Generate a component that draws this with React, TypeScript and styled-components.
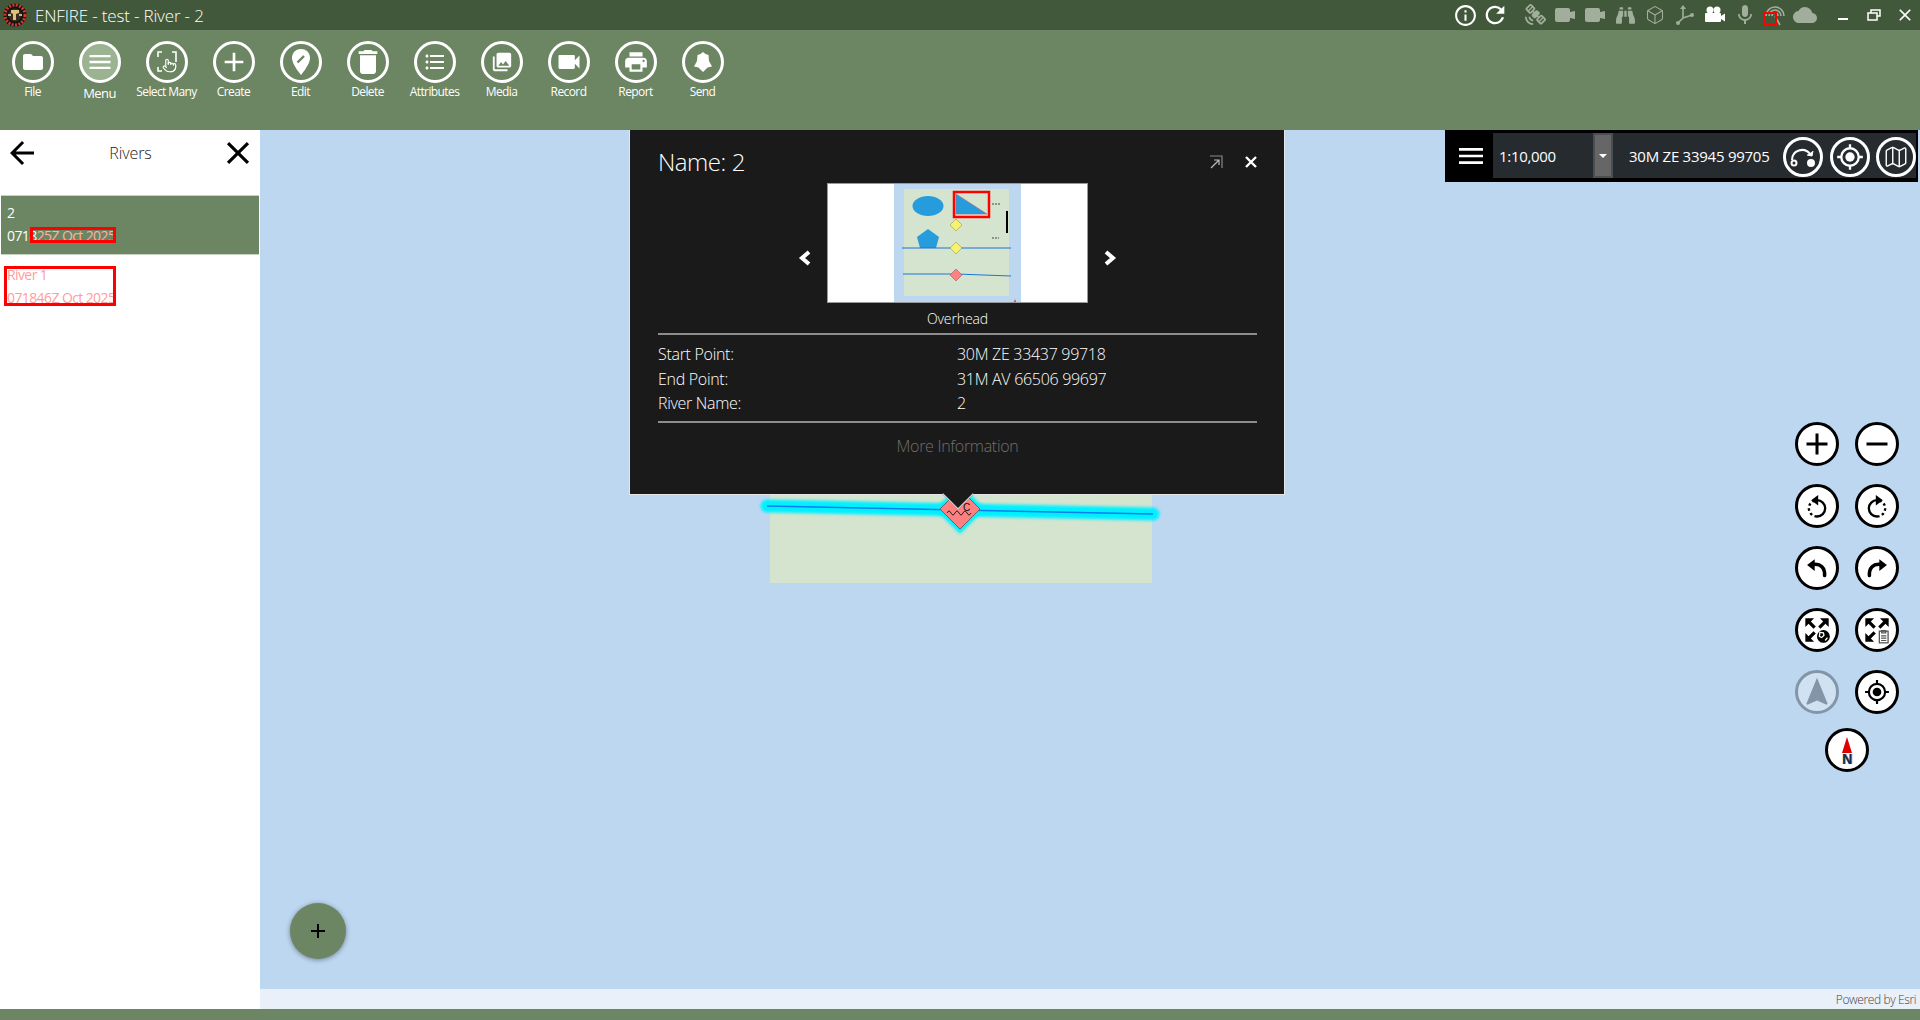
import React from 'react';
import styled, { createGlobalStyle } from 'styled-components';
import {
  MdFolder,
  MdMenu,
  MdAdd,
  MdRemove,
  MdDelete,
  MdFormatListBulleted,
  MdPhotoLibrary,
  MdVideocam,
  MdPrint,
  MdInfoOutline,
  MdRefresh,
  MdSatelliteAlt,
  MdMic,
  MdCloud,
  MdClose,
  MdArrowBack,
  MdNavigation,
} from 'react-icons/md';
import { FaBinoculars } from 'react-icons/fa';
import { Box, Map as MapIcon, Pointer } from 'lucide-react';

const GREEN = '#6c8562';
const GREEN_DARK = '#41583a';
const MAP_BLUE = '#bdd7f1';

const GlobalStyle = createGlobalStyle`
  html, body {
    margin: 0;
    height: 100%;
    overflow: hidden;
    background: #fff;
  }
  body {
    font-family: "Open Sans", "Liberation Sans", sans-serif;
    font-weight: 300;
  }
`;

const Page = styled.div`
  display: flex;
  flex-direction: column;
  width: 1920px;
  height: 1020px;
`;

const TitleBar = styled.div`
  display: flex;
  align-items: center;
  height: 30px;
  flex: none;
  background: ${GREEN_DARK};
  color: #fff;
`;

const AppTitle = styled.div`
  margin-left: 8px;
  font-size: 17px;
  letter-spacing: -0.17px;
  white-space: nowrap;
`;

const TitleSpacer = styled.div`
  flex: 1;
`;

const TitleGroup = styled.div<{ $gap?: number }>`
  display: flex;
  margin-left: ${({ $gap }) => $gap ?? 10}px;
`;

const TitleSlot = styled.div<{ $dim?: boolean; $width?: number; $flip?: boolean }>`
  position: relative;
  display: flex;
  align-items: center;
  justify-content: center;
  width: ${({ $width }) => $width ?? 30}px;
  height: 30px;
  color: ${({ $dim }) => ($dim ? '#a1ae9b' : '#fff')};
  font-size: 22px;

  svg {
    transform: ${({ $flip }) => ($flip ? 'scaleX(-1)' : 'none')};
  }
`;

const SignalMark = styled.div`
  position: absolute;
  left: 3px;
  top: 12px;
  width: 14px;
  height: 14px;
  box-sizing: border-box;
  border: 2px solid #f00;
`;

const Toolbar = styled.div`
  display: flex;
  height: 100px;
  flex: none;
  padding-left: 0;
  background: ${GREEN};
`;

const ToolButton = styled.div`
  display: flex;
  flex-direction: column;
  align-items: center;
  width: 67px;
  padding-top: 11px;
  color: #fff;

  &:first-child {
    margin-left: -1px;
  }
`;

const ToolRing = styled.div<{ $active?: boolean }>`
  display: flex;
  align-items: center;
  justify-content: center;
  width: 42px;
  height: 42px;
  box-sizing: border-box;
  border: 3px solid #fff;
  border-radius: 50%;
  font-size: 24px;
  background: ${({ $active }) => ($active ? '#9bb391' : 'transparent')};
`;

const ToolLabel = styled.div<{ $active?: boolean }>`
  margin-top: ${({ $active }) => ($active ? 2 : 1)}px;
  font-size: ${({ $active }) => ($active ? 13 : 12)}px;
  font-weight: 400;
  line-height: 16px;
  letter-spacing: -0.6px;
  white-space: nowrap;
`;

const Body = styled.div`
  display: flex;
  flex: 1;
  min-height: 0;
`;

const Sidebar = styled.div`
  display: flex;
  flex-direction: column;
  width: 260px;
  flex: none;
  background: #fff;
`;

const SidebarHeader = styled.div`
  display: grid;
  grid-template-columns: 1fr auto 1fr;
  align-items: center;
  height: 46px;
  padding: 0 3px 0 4px;
  margin-bottom: 19px;
  color: #000;

  svg:last-child {
    justify-self: end;
  }
`;

const SidebarTitle = styled.div`
  font-size: 16px;
  letter-spacing: -0.1px;
  color: #222;
`;

const RiverRow = styled.div<{ $selected?: boolean }>`
  position: relative;
  height: 60px;
  box-sizing: border-box;
  margin: 0 1px;
  padding: ${({ $selected }) => ($selected ? 5 : 8)}px 6px 0;
  font-size: 14px;
  line-height: 23px;
  font-weight: 400;
  color: #fff;
  background: ${({ $selected }) => ($selected ? GREEN : 'transparent')};
  border-top: ${({ $selected }) => ($selected ? '1px solid #c8d0c4' : 'none')};
  border-bottom: ${({ $selected }) => ($selected ? '1px solid #c8d0c4' : 'none')};
`;

const RowLine = styled.div<{ $pink?: boolean }>`
  white-space: nowrap;
  letter-spacing: -0.6px;
  color: ${({ $pink }) => ($pink ? '#ff9c9c' : 'inherit')};
`;

const PinkText = styled.span`
  color: #ffb0a8;
`;

const RedBox = styled.div<{ $left: number; $top: number; $width: number; $height: number }>`
  position: absolute;
  left: ${({ $left }) => $left}px;
  top: ${({ $top }) => $top}px;
  width: ${({ $width }) => $width}px;
  height: ${({ $height }) => $height}px;
  box-sizing: border-box;
  border: 3px solid #f00;
`;

const MapArea = styled.div`
  display: flex;
  flex-direction: column;
  flex: 1;
  min-width: 0;
`;

const MapCanvas = styled.div`
  position: relative;
  flex: 1;
  background: ${MAP_BLUE};
  overflow: hidden;
`;

const Attribution = styled.div`
  display: flex;
  align-items: center;
  justify-content: flex-end;
  height: 20px;
  flex: none;
  padding-right: 4px;
  background: #e9f0fa;
  color: #444;
  font-size: 12px;
  letter-spacing: -0.4px;
`;

const BottomBar = styled.div`
  height: 11px;
  flex: none;
  background: ${GREEN};
`;

const FeatureLayer = styled.svg`
  position: absolute;
  left: 0;
  top: 0;
`;

const Popup = styled.div`
  position: absolute;
  left: 369px;
  top: 0;
  width: 656px;
  height: 365px;
  box-sizing: border-box;
  padding: 0 27px 0 28px;
  background: #1a1a1a;
  border: solid #e6e6e6;
  border-width: 0 1px 1px;
  color: #fff;

  &::after {
    content: '';
    position: absolute;
    left: 317px;
    bottom: -11px;
    width: 21px;
    height: 21px;
    background: #1a1a1a;
    border: solid #e6e6e6;
    border-width: 0 1px 1px 0;
    transform: rotate(45deg);
  }
`;

const PopupHeader = styled.div`
  display: flex;
  align-items: center;
  justify-content: space-between;
  height: 43px;
  padding-top: 10px;
`;

const PopupTitle = styled.div`
  font-size: 24px;
  letter-spacing: -0.45px;
`;

const PopupActions = styled.div`
  display: flex;
  align-items: center;
  gap: 22px;
`;

const Carousel = styled.div`
  display: flex;
  align-items: center;
  justify-content: center;
  gap: 16px;
  height: 120px;
`;

const CarouselArrow = styled.svg`
  margin-top: 30px;
`;

const ThumbFrame = styled.div`
  display: flex;
  justify-content: center;
  width: 261px;
  height: 120px;
  box-sizing: border-box;
  background: #fff;
  border: 1px solid #999;
  overflow: hidden;
`;

const Caption = styled.div`
  height: 30px;
  line-height: 31px;
  text-align: center;
  font-size: 14px;
  letter-spacing: -0.1px;
`;

const Rule = styled.div`
  height: 2px;
  background: #8c8c8c;
`;

const AttrTable = styled.div`
  display: grid;
  grid-template-columns: 299px 1fr;
  grid-auto-rows: 24.5px;
  align-items: center;
  padding: 7px 0 5px;
  font-size: 16px;
  letter-spacing: -0.3px;
`;

const MoreInfo = styled.div`
  height: 46px;
  line-height: 46px;
  text-align: center;
  font-size: 16px;
  letter-spacing: -0.3px;
  color: #707070;
`;

const ScaleBar = styled.div`
  position: absolute;
  right: 2px;
  top: 0;
  display: flex;
  align-items: stretch;
  width: 473px;
  height: 52px;
  box-sizing: border-box;
  padding: 3px 2px 4px 4px;
  background: #000;
  color: #fff;
`;

const ScaleMenu = styled.div`
  display: flex;
  align-items: center;
  justify-content: center;
  width: 44px;
  font-size: 32px;
  background: #000;
`;

const ScaleField = styled.div`
  display: flex;
  align-items: center;
  width: 100px;
  box-sizing: border-box;
  padding-left: 6px;
  background: #262b2f;
  font-size: 15px;
  font-weight: 400;
  letter-spacing: -0.3px;
`;

const ScaleDrop = styled.div`
  display: flex;
  align-items: center;
  justify-content: center;
  width: 20px;
  background: #666;
  border: 2px solid #4b4f52;
  box-sizing: border-box;

  &::before {
    content: '';
    border: solid transparent;
    border-width: 4px 4px 0;
    border-top-color: #fff;
  }
`;

const CoordField = styled.div`
  display: flex;
  align-items: center;
  flex: 1;
  padding-left: 16px;
  background: #262b2f;
  font-size: 15px;
  font-weight: 400;
  letter-spacing: -0.25px;
  white-space: nowrap;
`;

const ScaleIcons = styled.div`
  display: flex;
  gap: 6.5px;
  margin-left: auto;
`;

const ScaleRing = styled.div`
  display: flex;
  align-items: center;
  justify-content: center;
  width: 40px;
  height: 40px;
  margin-top: 3px;
  box-sizing: border-box;
  border: 3px solid #fff;
  border-radius: 50%;
  font-size: 24px;
`;

const MapControls = styled.div`
  position: absolute;
  right: 21px;
  top: 292px;
  display: grid;
  grid-template-columns: repeat(2, 44px);
  grid-auto-rows: 44px;
  column-gap: 16px;
  row-gap: 18px;
  justify-items: center;
`;

const RoundControl = styled.div<{ $disabled?: boolean; $wide?: boolean }>`
  display: flex;
  align-items: center;
  justify-content: center;
  width: 44px;
  height: 44px;
  box-sizing: border-box;
  border: 3px solid ${({ $disabled }) => ($disabled ? '#8296a8' : '#000')};
  border-radius: 50%;
  background: ${({ $disabled }) => ($disabled ? '#d0e1f2' : '#fff')};
  color: ${({ $disabled }) => ($disabled ? '#8296a8' : '#000')};
  font-size: 30px;
  grid-column: ${({ $wide }) => ($wide ? '1 / span 2' : 'auto')};
  margin-top: ${({ $wide }) => ($wide ? -4 : 0)}px;
`;

const CompassStack = styled.div`
  display: flex;
  flex-direction: column;
  align-items: center;
`;

const CompassN = styled.div`
  margin-top: 1px;
  font-family: "Liberation Sans", sans-serif;
  font-size: 14px;
  font-weight: 700;
  line-height: 10px;
  color: #0c2d6b;
  text-shadow: 1px 0 0 #c98a2a;
`;

const Fab = styled.div`
  position: absolute;
  left: 30px;
  bottom: 30px;
  display: flex;
  align-items: center;
  justify-content: center;
  width: 56px;
  height: 56px;
  border-radius: 50%;
  background: ${GREEN};
  box-shadow: 0 1px 5px rgba(0, 0, 0, 0.4);
  color: #000;
`;

const Logo = () => (
  <svg width="24" height="24" viewBox="0 0 24 24" style={{ marginLeft: 3, flex: 'none' }}>
    <circle cx="12" cy="12" r="11.5" fill="#141414" />
    <circle cx="12" cy="12" r="10" fill="none" stroke="#d43a30" strokeWidth="3" strokeDasharray="2 1.4" />
    <circle cx="12" cy="12" r="6.5" fill="#3a2b1c" />
    <path d="M8 7h8v3l-3 1v6h-3v-6L8 10z" fill="#d9c27a" />
    <path d="M5 12h3M16 12h3" stroke="#e6e0cf" strokeWidth="1.4" />
  </svg>
);

const SelectManyIcon = () => (
  <svg width="26" height="26" viewBox="0 0 26 26" fill="none" stroke="#fff" strokeWidth="1.6">
    <path d="M8 3H4v5M18 3h4v5M4 18v4h4M22 13V8" />
    <Pointer x={8} y={9} width={15} height={15} strokeWidth={1.8} color="#fff" />
  </svg>
);

const EditPinIcon = () => (
  <svg width="24" height="28" viewBox="0 0 24 28">
    <path d="M12 1C6 1 3 5.500 3 10c0 6.500 9 17 9 17s9-10.500 9-17c0-4.500-3-9-9-9z" fill="#fff" />
    <path d="M8.500 14.500l6.500-6.500" stroke={GREEN} strokeWidth="2.4" />
  </svg>
);

const SendIcon = () => (
  <svg width="24" height="24" viewBox="0 0 24 24" fill="#fff">
    <path d="M12 2l2.500 2 3 1 .5 6 3 5.500-4.500 1L12 22l-4.500-4.500-4.500-1L6 11l.5-6 3-1z" />
  </svg>
);

const CameraFilled = () => (
  <svg width="22" height="18" viewBox="0 0 22 18" fill="currentColor">
    <rect x="1" y="2" width="15" height="14" rx="2" />
    <path d="M16 6l5-1v8l-5-1z" />
  </svg>
);

const AxisIcon = () => (
  <svg width="22" height="22" viewBox="0 0 22 22" fill="currentColor" stroke="currentColor" strokeWidth="1.6">
    <path d="M9 3v11M9 14l-5 5M9 14l9-3" fill="none" />
    <path d="M6 5l3-4 3 4z" stroke="none" />
    <circle cx="4" cy="19" r="2" stroke="none" />
    <circle cx="18" cy="11" r="2" stroke="none" />
  </svg>
);

const MovieCameraIcon = () => (
  <svg width="22" height="20" viewBox="0 0 22 20" fill="#fff">
    <circle cx="6" cy="5" r="3.500" />
    <circle cx="13" cy="5" r="3.500" />
    <rect x="1" y="8" width="16" height="9" rx="1" />
    <path d="M17 11l4-2.500v8L17 14z" />
  </svg>
);

const SignalIcon = () => (
  <svg width="22" height="22" viewBox="0 0 22 22" fill="none" stroke="currentColor" strokeWidth="1.6">
    <path d="M2 12a9 9 0 0 1 18 0M5 12a6 6 0 0 1 12 0M8 12a3 3 0 0 1 6 0" />
    <path d="M11 12l5 9" />
  </svg>
);

const RestoreIcon = () => (
  <svg width="14" height="12" viewBox="0 0 14 12" fill="none" stroke="#fff" strokeWidth="1.500">
    <rect x="1" y="4" width="9" height="7" />
    <path d="M4 4V1h9v6h-3" />
  </svg>
);

const MinimizeIcon = () => (
  <svg width="10" height="12" viewBox="0 0 10 12">
    <rect x="0" y="9" width="10" height="2" fill="#fff" />
  </svg>
);

const SmallClose = () => (
  <svg width="12" height="12" viewBox="0 0 12 12" stroke="#fff" strokeWidth="2.400">
    <path d="M1 1l10 10M11 1L1 11" />
  </svg>
);

const PopoutIcon = () => (
  <svg width="14" height="14" viewBox="0 0 14 14" fill="none" stroke="#bbb" strokeWidth="1.200">
    <path d="M1 1h12v12" stroke="#888" />
    <path d="M2 13l8-8M5 5h5v5" />
  </svg>
);

const ReturnIcon = () => (
  <svg width="30" height="24" viewBox="0 0 30 24" fill="none" stroke="#fff" strokeWidth="2">
    <path d="M4 15A10 10 0 0 1 22 9" />
    <circle cx="6" cy="18" r="2.500" />
    <circle cx="23" cy="18" r="3" fill="#fff" />
    <path d="M19 10l5 1 1-5" fill="#fff" strokeWidth="1" />
  </svg>
);

const TargetIcon = ({ size, ink }: { size: number; ink: string }) => (
  <svg width={size} height={size} viewBox="0 0 24 24" fill="none" stroke={ink} strokeWidth="2">
    <circle cx="12" cy="12" r="7.500" />
    <circle cx="12" cy="12" r="4" fill={ink} stroke="none" />
    <path d="M12 1v3.500M12 19.500V23M1 12h3.500M19.500 12H23" />
  </svg>
);

const RotateIcon = ({ flip }: { flip?: boolean }) => (
  <svg width="28" height="28" viewBox="0 0 24 24" fill="none" stroke="#000" strokeWidth="2" style={{ transform: flip ? 'scaleX(-1)' : undefined }}>
    <path d="M12 7a7 7 0 0 1 0 14" />
    <path d="M12 21a7 7 0 0 1 0-14" strokeDasharray="2.200 2.200" />
    <path d="M7 7l6-4.500v9z" fill="#000" stroke="none" />
  </svg>
);

const UndoIcon = ({ flip }: { flip?: boolean }) => (
  <svg width="28" height="28" viewBox="0 0 24 24" fill="none" stroke="#000" strokeWidth="3" style={{ transform: flip ? 'scaleX(-1)' : undefined }}>
    <path d="M9 9c6-1 10 3 9.500 9.500" strokeLinecap="round" />
    <path d="M3.500 9.500L10 4.500v10z" fill="#000" stroke="none" />
  </svg>
);

const CornerArrows = () => (
  <>
    <path d="M2 2h7.500L2 9.500zM22 2h-7.500L22 9.500zM2 22v-7.500L9.500 22z" fill="#000" />
    <path d="M4 4l6 6M20 4l-6 6M4 20l6-6" stroke="#000" strokeWidth="2.800" />
  </>
);

const FitGlobeIcon = () => (
  <svg width="28" height="28" viewBox="0 0 24 24" fill="none">
    <CornerArrows />
    <circle cx="17.500" cy="17.500" r="5.500" fill="#000" />
    <path d="M14.500 14l3 .5 .5 2-2 2-2-1zM19 21l2-2.500" stroke="#fff" strokeWidth="1.100" />
  </svg>
);

const FitClipIcon = () => (
  <svg width="28" height="28" viewBox="0 0 24 24" fill="none">
    <CornerArrows />
    <rect x="14" y="13" width="7.500" height="10" fill="#fff" stroke="#555" strokeWidth="1.100" />
    <path d="M16 12.500h3.500v2H16zM15.500 17h4.500M15.500 19h4.500M15.500 21h4.500" stroke="#555" strokeWidth="1" />
  </svg>
);

const Thumbnail = () => (
  <svg width="127" height="118" viewBox="0 1 127 118">
    <rect x="0" y="0" width="127" height="120" fill={MAP_BLUE} />
    <rect x="10" y="6" width="105" height="107" fill="#d4e4cf" />
    <ellipse cx="34" cy="23" rx="15.500" ry="10" fill="#269cdc" />
    <path d="M62 11l31 20H62z" fill="#269cdc" stroke="#c75a6a" strokeWidth="0.600" />
    <rect x="60" y="9" width="35" height="25" fill="none" stroke="#f00" strokeWidth="2.500" />
    <path d="M34 46l11 8-3 11H26l-3-11z" fill="#269cdc" />
    <path d="M8 65h109M9 91l53 0 55 2" stroke="#1d74d8" strokeWidth="1" fill="none" />
    <path d="M62 36l6 6-6 6-6-6zM62 59l6 6-6 6-6-6z" fill="#f7f26e" stroke="#8a8a4a" strokeWidth="0.500" />
    <path d="M62 86l6 6-6 6-6-6z" fill="#ff8080" stroke="#8a5050" strokeWidth="0.500" />
    <rect x="112" y="28" width="2" height="22" fill="#000" />
    <path d="M98 21h8M98 55h7" stroke="#777" strokeWidth="1.500" strokeDasharray="2 1" />
    <path d="M121 116l-1 3h2z" fill="#d33" />
  </svg>
);

const MapFeatures = () => (
  <FeatureLayer width="1660" height="859" viewBox="0 0 1660 859">
    <defs>
      <filter id="glow" x="-5%" y="-300%" width="110%" height="700%">
        <feGaussianBlur stdDeviation="1.500" />
      </filter>
    </defs>
    <rect x="510" y="360" width="382" height="93" fill="#d4e4cf" />
    <path d="M507 376l386 8" stroke="#00f0ff" strokeWidth="13" strokeLinecap="round" filter="url(#glow)" />
    <path d="M700 354l25 25-25 25-25-25z" fill="#00f0ff" filter="url(#glow)" />
    <path d="M507 376l386 8" stroke="#0a7df0" strokeWidth="1.500" />
    <path d="M700 359l20 20-20 20-20-20z" fill="#ff8080" stroke="#666" strokeWidth="1" />
    <path d="M687 383q2-4 4 0t4 0 4 0 4 0 4 0 4 0" fill="none" stroke="#222" strokeWidth="1" />
    <text x="703" y="381" fontSize="10" fontFamily="Liberation Sans, sans-serif" fill="#111">C</text>
  </FeatureLayer>
);

const tools = [
  { label: 'File', icon: <MdFolder /> },
  { label: 'Menu', icon: <MdMenu size={28} />, active: true },
  { label: 'Select Many', icon: <SelectManyIcon /> },
  { label: 'Create', icon: <MdAdd size={32} /> },
  { label: 'Edit', icon: <EditPinIcon /> },
  { label: 'Delete', icon: <MdDelete size={32} /> },
  { label: 'Attributes', icon: <MdFormatListBulleted size={24} /> },
  { label: 'Media', icon: <MdPhotoLibrary size={22} /> },
  { label: 'Record', icon: <MdVideocam size={28} /> },
  { label: 'Report', icon: <MdPrint size={26} /> },
  { label: 'Send', icon: <SendIcon /> },
];

export default function App() {
  return (
    <Page>
      <GlobalStyle />
      <TitleBar>
        <Logo />
        <AppTitle>ENFIRE - test - River - 2</AppTitle>
        <TitleSpacer />
        <TitleGroup>
          <TitleSlot><MdInfoOutline size={25} /></TitleSlot>
          <TitleSlot><MdRefresh size={28} /></TitleSlot>
        </TitleGroup>
        <TitleGroup>
          <TitleSlot $dim $flip><MdSatelliteAlt size={22} /></TitleSlot>
          <TitleSlot $dim><CameraFilled /></TitleSlot>
          <TitleSlot $dim><CameraFilled /></TitleSlot>
          <TitleSlot $dim><FaBinoculars size={19} /></TitleSlot>
          <TitleSlot $dim><Box size={20} strokeWidth={1.300} /></TitleSlot>
          <TitleSlot $dim><AxisIcon /></TitleSlot>
          <TitleSlot><MovieCameraIcon /></TitleSlot>
          <TitleSlot $dim><MdMic size={24} /></TitleSlot>
          <TitleSlot $dim>
            <SignalIcon />
            <SignalMark />
          </TitleSlot>
          <TitleSlot $dim><MdCloud size={24} /></TitleSlot>
        </TitleGroup>
        <TitleGroup $gap={7}>
          <TitleSlot $width={31}><MinimizeIcon /></TitleSlot>
          <TitleSlot $width={31}><RestoreIcon /></TitleSlot>
          <TitleSlot $width={31}><MdClose size={20} /></TitleSlot>
        </TitleGroup>
      </TitleBar>

      <Toolbar>
        {tools.map((tool) => (
          <ToolButton key={tool.label}>
            <ToolRing $active={tool.active}>{tool.icon}</ToolRing>
            <ToolLabel $active={tool.active}>{tool.label}</ToolLabel>
          </ToolButton>
        ))}
      </Toolbar>

      <Body>
        <Sidebar>
          <SidebarHeader>
            <MdArrowBack size={36} />
            <SidebarTitle>Rivers</SidebarTitle>
            <MdClose size={38} />
          </SidebarHeader>
          <RiverRow $selected>
            <RowLine>2</RowLine>
            <RowLine>0718<PinkText>25Z Oct 2025</PinkText></RowLine>
            <RedBox $left={29} $top={31} $width={86} $height={16} />
          </RiverRow>
          <RiverRow>
            <RowLine $pink>River 1</RowLine>
            <RowLine $pink>071846Z Oct 2025</RowLine>
            <RedBox $left={3} $top={11} $width={112} $height={40} />
          </RiverRow>
        </Sidebar>

        <MapArea>
          <MapCanvas>
            <MapFeatures />

            <Popup>
              <PopupHeader>
                <PopupTitle>Name: 2</PopupTitle>
                <PopupActions>
                  <PopoutIcon />
                  <SmallClose />
                </PopupActions>
              </PopupHeader>
              <Carousel>
                <CarouselArrow width="14" height="16" viewBox="0 0 14 16" fill="none" stroke="#fff" strokeWidth="4">
                  <path d="M12 2L5 8l7 6" />
                </CarouselArrow>
                <ThumbFrame><Thumbnail /></ThumbFrame>
                <CarouselArrow width="14" height="16" viewBox="0 0 14 16" fill="none" stroke="#fff" strokeWidth="4">
                  <path d="M2 2l7 6-7 6" />
                </CarouselArrow>
              </Carousel>
              <Caption>Overhead</Caption>
              <Rule />
              <AttrTable>
                <div>Start Point:</div>
                <div>30M ZE 33437 99718</div>
                <div>End Point:</div>
                <div>31M AV 66506 99697</div>
                <div>River Name:</div>
                <div>2</div>
              </AttrTable>
              <Rule />
              <MoreInfo>More Information</MoreInfo>
            </Popup>

            <ScaleBar>
              <ScaleMenu><MdMenu /></ScaleMenu>
              <ScaleField>1:10,000</ScaleField>
              <ScaleDrop />
              <CoordField>
                30M ZE 33945 99705
                <ScaleIcons>
                  <ScaleRing><ReturnIcon /></ScaleRing>
                  <ScaleRing><TargetIcon size={28} ink="#fff" /></ScaleRing>
                  <ScaleRing><MapIcon size={26} strokeWidth={1.300} /></ScaleRing>
                </ScaleIcons>
              </CoordField>
            </ScaleBar>

            <MapControls>
              <RoundControl><MdAdd size={36} /></RoundControl>
              <RoundControl><MdRemove size={36} /></RoundControl>
              <RoundControl><RotateIcon /></RoundControl>
              <RoundControl><RotateIcon flip /></RoundControl>
              <RoundControl><UndoIcon /></RoundControl>
              <RoundControl><UndoIcon flip /></RoundControl>
              <RoundControl><FitGlobeIcon /></RoundControl>
              <RoundControl><FitClipIcon /></RoundControl>
              <RoundControl $disabled><MdNavigation size={34} /></RoundControl>
              <RoundControl><TargetIcon size={26} ink="#000" /></RoundControl>
              <RoundControl $wide>
                <CompassStack>
                  <svg width="10" height="16" viewBox="0 0 10 16"><path d="M5 0l5 16H0z" fill="#e00000" /></svg>
                  <CompassN>N</CompassN>
                </CompassStack>
              </RoundControl>
            </MapControls>

            <Fab>
              <svg width="16" height="16" viewBox="0 0 16 16" stroke="#000" strokeWidth="2"><path d="M8 1v14M1 8h14" /></svg>
            </Fab>
          </MapCanvas>
          <Attribution>Powered by Esri</Attribution>
        </MapArea>
      </Body>
      <BottomBar />
    </Page>
  );
}
